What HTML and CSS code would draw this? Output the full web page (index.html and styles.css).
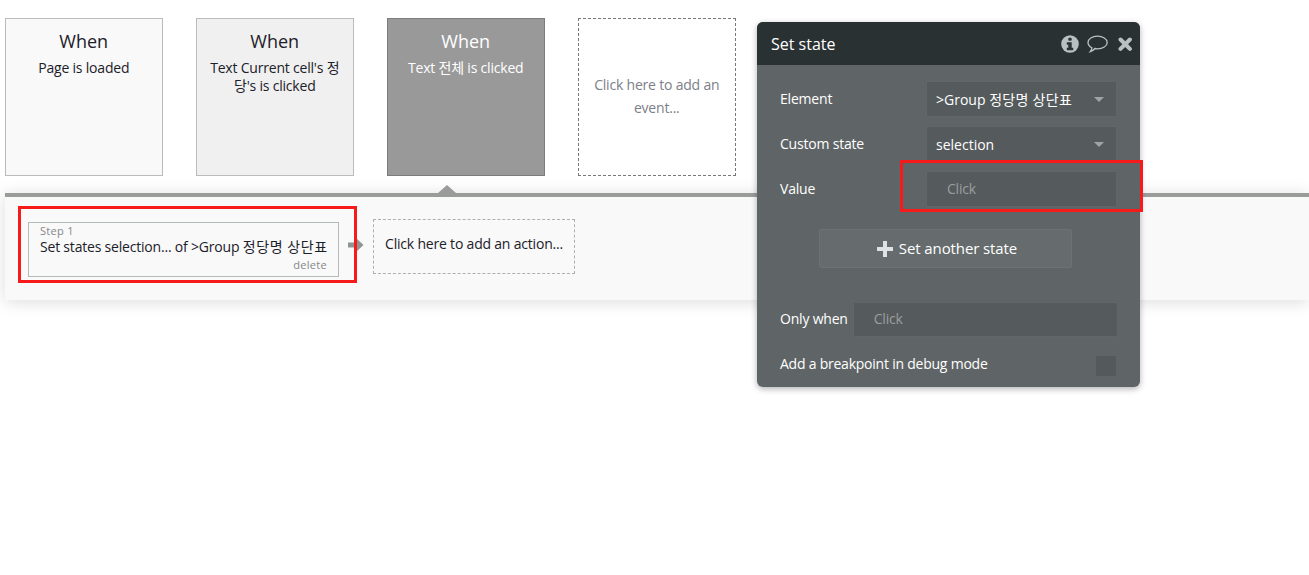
FILE: index.html
```html
<!DOCTYPE html>
<html lang="ko">
<head>
<meta charset="utf-8">
<title>Set state</title>
<link rel="stylesheet" href="styles.css">
</head>
<body>
<div class="events">
  <div class="event event-light"><div class="when">When</div><div class="desc">Page is loaded</div></div>
  <div class="event event-grey"><div class="when">When</div><div class="desc">Text Current cell's 정당's is clicked</div></div>
  <div class="event event-active"><div class="when">When</div><div class="desc">Text 전체 is clicked</div></div>
  <div class="event event-add">Click here to add an event...</div>
</div>
<div class="workflow">
  <div class="caret"></div>
  <div class="actions">
    <div class="step">
      <div class="step-label">Step 1</div>
      <div class="step-title">Set states selection... of &gt;Group <span class="ko-wide">정당명 상단표</span></div>
      <div class="step-delete">delete</div>
    </div>
    <svg class="step-arrow" width="16" height="14" viewBox="0 0 16 14"><path d="M0 4.500h8V0l7.500 7L8 14V9.500H0z" fill="#8f9594"/></svg>
    <div class="action-add">Click here to add an action...</div>
  </div>
</div>
<div class="highlight highlight-step"></div>

<div class="popup">
  <div class="popup-head">
    <span class="popup-title">Set state</span>
    <div class="popup-icons">
      <svg width="18" height="18" viewBox="0 0 18 18"><circle cx="9" cy="9" r="8.800" fill="#b9c0c2"/><rect x="7.300" y="2.800" width="3.400" height="3" rx="1" fill="#2b3233"/><path d="M5.800 7.300h4.900v5.500h1.500v2.400H5.800v-2.400h1.500V9.700H5.800z" fill="#2b3233"/></svg>
      <svg width="21" height="18" viewBox="0 0 21 18"><path d="M10.500 1.200c5.200 0 9.700 2.700 9.700 6.300s-4.500 6.300-9.700 6.300c-.9 0-1.800-.1-2.600-.3-1 1.300-2.500 2.600-4.600 3.200.9-1.100 1.500-2.400 1.600-3.900C2.600 11.600 1 9.700 1 7.500c0-3.600 4.300-6.300 9.500-6.300z" fill="none" stroke="#b9c0c2" stroke-width="1.300"/></svg>
      <svg class="icon-close" width="15" height="15" viewBox="0 0 15 15"><path d="M2.500 2.500l9.400 9.400M11.900 2.500l-9.400 9.400" stroke="#b9c0c2" stroke-width="4" stroke-linecap="round"/></svg>
    </div>
  </div>
  <div class="popup-body">
    <div class="field">
      <span class="field-label">Element</span>
      <div class="select"><span>&gt;Group <span class="ko">정당명 상단표</span></span><i class="drop"></i></div>
    </div>
    <div class="field">
      <span class="field-label">Custom state</span>
      <div class="select"><span>selection</span><i class="drop"></i></div>
    </div>
    <div class="field">
      <span class="field-label">Value</span>
      <div class="input input-value">Click</div>
    </div>
    <div class="another"><span class="plus"></span>Set another state</div>
    <div class="only-when">
      <span class="field-label only-label">Only when</span>
      <div class="input input-only">Click</div>
    </div>
    <div class="breakpoint">
      <span class="field-label">Add a breakpoint in debug mode</span>
      <span class="check"></span>
    </div>
  </div>
</div>
<div class="highlight highlight-value"></div>
</body>
</html>
```
FILE: styles.css
```css
* { box-sizing: border-box; }
html, body { margin: 0; height: 100%; overflow: hidden; }
body {
  position: relative;
  background: #fff;
  font-family: "Open Sans", "Noto Sans CJK KR", sans-serif;
  font-size: 14px;
  letter-spacing: -.2px;
  color: #1c2029;
}
.ko { letter-spacing: .3px; }
.ko-wide { letter-spacing: .6px; }
.events {
  display: flex;
  gap: 33.500px;
  padding: 18px 0 0 5px;
}
.event {
  width: 157.500px;
  height: 158px;
  padding: 10px 4px 0;
  text-align: center;
  border: 1px solid #b9bcbc;
  line-height: 18px;
  flex: none;
}
.event-light { background: #f9f9f9; }
.event-grey { background: #f0f0f0; }
.event-active { background: #999; border-color: #7c7c7c; color: #fff; }
.event-add {
  display: flex;
  align-items: center;
  justify-content: center;
  padding: 0 8px 3px;
  background: #fff;
  border: 1px dashed #777;
  color: #7d8088;
  line-height: 23px;
}
.when { font-size: 18px; line-height: 25px; margin-bottom: 5px; letter-spacing: 0; }
.workflow {
  position: relative;
  margin: 17px 0 0 5px;
  height: 107px;
  background: #f9f9f9;
  border-top: 4px solid #9a9c9a;
  box-shadow: 0 2px 16px rgba(0, 0, 0, .14);
}
.caret {
  position: absolute;
  left: 433px;
  top: -12px;
  width: 0;
  height: 0;
  border-left: 9px solid transparent;
  border-right: 9px solid transparent;
  border-bottom: 8px solid #9a9c9a;
}
.actions {
  display: flex;
  align-items: flex-start;
  padding: 22px 0 0 23px;
}
.step {
  position: relative;
  width: 311px;
  height: 55px;
  margin-top: 3px;
  padding: 1px 11px 0;
  background: #f9f9f9;
  border: 1px solid #b4b9b9;
}
.step-label { font-size: 11px; line-height: 13px; color: #85888a; letter-spacing: .3px; }
.step-title { font-size: 14px; line-height: 18px; margin-top: 1px; white-space: nowrap; }
.step-delete { font-size: 11px; line-height: 14px; color: #85888a; text-align: right; margin-top: 2px; letter-spacing: .3px; }
.step-arrow { margin: 19px 9px 0 9px; flex: none; }
.action-add {
  width: 202px;
  height: 55px;
  display: flex;
  align-items: center;
  justify-content: center;
  border: 1px dashed #aeb0b0;
  padding-bottom: 6px;
  white-space: nowrap;
}
.highlight {
  position: absolute;
  border: 3px solid #f71a1a;
  pointer-events: none;
}
.highlight-step { left: 18px; top: 206px; width: 339px; height: 77px; }
.highlight-value { left: 900px; top: 160px; width: 243px; height: 52px; }
.popup {
  position: absolute;
  left: 757px;
  top: 22px;
  width: 383px;
  height: 365px;
  background: #5f6566;
  border-radius: 6px;
  box-shadow: 0 2px 6px rgba(0, 0, 0, .3);
  color: #fff;
  overflow: hidden;
}
.popup-head {
  height: 43px;
  padding: 0 7px 0 14px;
  display: flex;
  align-items: center;
  justify-content: space-between;
  background: #2a3133;
}
.popup-title { font-size: 16px; letter-spacing: 0; }
.popup-icons { display: flex; align-items: center; gap: 8.500px; margin-top: 1px; }
.icon-close { margin-left: 1.500px; }
.popup-body { padding: 17px 23px 0; }
.field {
  display: flex;
  align-items: center;
  justify-content: space-between;
  height: 34px;
  margin-bottom: 11px;
}
.field-label { font-size: 14px; margin-top: -1px; }
.select, .input {
  width: 189px;
  height: 34px;
  background: #555a5c;
  box-shadow: 0 0 1px rgba(255, 255, 255, .1);
}
.select {
  display: flex;
  align-items: center;
  justify-content: space-between;
  padding: 0 12px 0 9px;
  margin-right: 1px;
  letter-spacing: 0;
}
.drop {
  width: 0;
  height: 0;
  border-left: 5px solid transparent;
  border-right: 5px solid transparent;
  border-top: 5px solid #9fa4a5;
  margin-top: 1px;
}
.input { display: flex; align-items: center; color: #9a9e9f; padding-bottom: 2px; }
.input-value { padding-left: 20px; margin-right: 1px; }
.another {
  display: flex;
  align-items: center;
  justify-content: center;
  width: 253px;
  height: 39px;
  margin: 23px 0 35px 39px;
  padding: 0 0 2px 2px;
  background: #666c6d;
  border: 1px solid #6c7273;
  border-radius: 2px;
  font-size: 15px;
  letter-spacing: -.1px;
}
.plus {
  position: relative;
  width: 16px;
  height: 16px;
  margin: 2px 6px 0 1px;
  background:
    linear-gradient(#dfe2e2, #dfe2e2) center / 16px 4px no-repeat,
    linear-gradient(#dfe2e2, #dfe2e2) center / 4px 16px no-repeat;
}
.only-when { display: flex; align-items: center; height: 33px; }
.only-label { margin: -3px 6px 0 0; white-space: nowrap; }
.input-only { width: 263px; height: 33px; padding-left: 20px; flex: none; }
.breakpoint {
  display: flex;
  align-items: center;
  justify-content: space-between;
  height: 22px;
  margin-top: 17px;
  letter-spacing: -.23px;
}
.check { width: 20px; height: 20px; background: #545a5b; margin-right: 1px; margin-top: 4px; }
```
